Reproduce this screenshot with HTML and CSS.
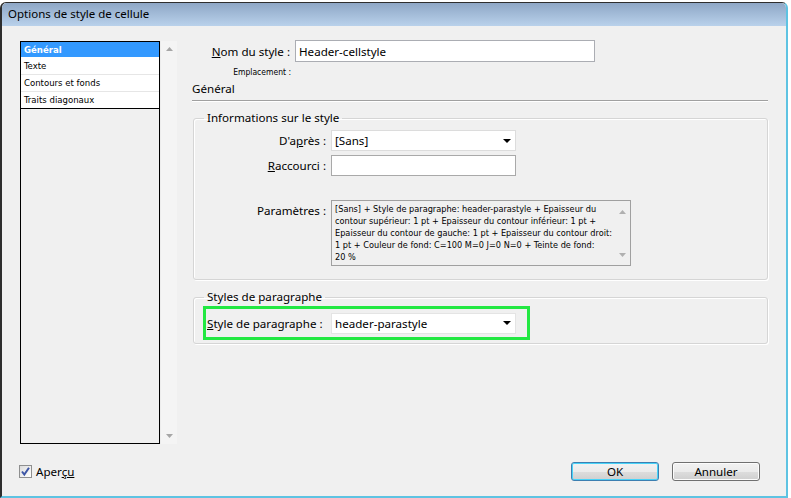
FILE: index.html
```html
<!DOCTYPE html>
<html lang="fr">
<head>
<meta charset="utf-8">
<title>Options de style de cellule</title>
<link rel="stylesheet" href="styles.css">
</head>
<body>
<div class="window">
  <div class="titlebar">Options de style de cellule</div>
  <div class="client">
    <div class="main">
      <div class="side">
        <ul class="list">
          <li class="item sel">Général</li>
          <li class="item">Texte</li>
          <li class="item">Contours et fonds</li>
          <li class="item last">Traits diagonaux</li>
        </ul>
        <div class="vscroll">
          <svg class="arr" width="7" height="4" viewBox="0 0 7 4"><path d="M0 4 L3.5 0 L7 4 Z" fill="#a6a6a6"/></svg>
          <svg class="arr" width="7" height="4" viewBox="0 0 7 4"><path d="M0 0 L3.5 4 L7 0 Z" fill="#a6a6a6"/></svg>
        </div>
      </div>
      <div class="panel">
        <div class="name-row">
          <span class="name-lbl"><u>N</u>om du style :</span>
          <div class="field name-input">Header-cellstyle</div>
        </div>
        <div class="emplacement">Emplacement :</div>
        <div class="section-title">Général</div>
        <div class="rule"></div>
        <fieldset class="group g1">
          <legend>Informations sur le style</legend>
          <div class="frow r1">
            <span class="flbl">D'a<u>p</u>rès :</span>
            <div class="field select sel-apres"><span>[Sans]</span><svg class="caret" width="8" height="4" viewBox="0 0 8 4"><path d="M0 0 H8 L4 4 Z" fill="#000"/></svg></div>
          </div>
          <div class="frow r2">
            <span class="flbl"><u>R</u>accourci :</span>
            <div class="field input-rac"></div>
          </div>
          <div class="frow r3">
            <span class="flbl plbl">Paramètres :</span>
            <div class="textarea">
              <div class="ta-text">[Sans] + Style de paragraphe: header-parastyle + Epaisseur du<br>contour supérieur: 1 pt + Epaisseur du contour inférieur: 1 pt +<br>Epaisseur du contour de gauche: 1 pt + Epaisseur du contour droit:<br>1 pt + Couleur de fond: C=100 M=0 J=0 N=0 + Teinte de fond:<br>20 %</div>
              <div class="ta-scroll">
                <svg width="7" height="4" viewBox="0 0 7 4"><path d="M0 4 L3.5 0 L7 4 Z" fill="#b0b0b0"/></svg>
                <svg width="7" height="4" viewBox="0 0 7 4"><path d="M0 0 L3.5 4 L7 0 Z" fill="#b0b0b0"/></svg>
              </div>
            </div>
          </div>
        </fieldset>
        <fieldset class="group g2">
          <legend>Styles de paragraphe</legend>
          <div class="highlight">
            <span class="hl-lbl"><u>S</u>tyle de paragraphe :</span>
            <div class="field select sel-para"><span>header-parastyle</span><svg class="caret" width="8" height="4" viewBox="0 0 8 4"><path d="M0 0 H8 L4 4 Z" fill="#000"/></svg></div>
          </div>
        </fieldset>
      </div>
    </div>
    <div class="footer">
      <div class="check">
        <span class="cbox"><svg width="11" height="11" viewBox="0 0 11 11"><path d="M2 5.5 L4.3 8.5 L9 1.8" fill="none" stroke="#3d56a6" stroke-width="2"/></svg></span>
        <span class="clbl">Aper<u>çu</u></span>
      </div>
      <div class="buttons">
        <div class="btn default">OK</div>
        <div class="btn">Annuler</div>
      </div>
    </div>
  </div>
</div>
</body>
</html>
```

FILE: styles.css
```css
* { box-sizing: border-box; }
html, body { margin: 0; padding: 0; background: #ffffff; }
body {
  font-family: "Noto Sans", "Open Sans", sans-serif;
  font-size: 11px;
  color: #000;
  width: 791px;
  height: 498px;
  overflow: hidden;
}
.window {
  margin-top: 2px;
  width: 788px;
  height: 496px;
  background: #f0f0f0;
  border-left: 2px solid #2e2e2e;
  border-top: 1px solid #2e2e2e;
  border-right: 2px solid #5ec3e2;
  border-bottom: 2px solid #5ec3e2;
  border-radius: 6px 6px 0 0;
  display: flex;
  flex-direction: column;
}
.titlebar {
  height: 23px;
  background: linear-gradient(#8ea7c6, #b9d1eb);
  border-radius: 5px 5px 0 0;
  padding-left: 6px;
  line-height: 22px;
  font-size: 11.5px;
}
.client {
  padding: 15px 17px 0 18px;
  display: flex;
  flex-direction: column;
}
.main {
  display: flex;
  height: 403px;
  gap: 15px;
}
.side {
  display: flex;
  width: 157px;
}
.list {
  margin: 0;
  padding: 0;
  list-style: none;
  width: 140px;
  border: 1px solid #000;
  background: #f0f0f0;
  font-family: "DejaVu Sans Condensed", "DejaVu Sans", sans-serif;
  font-size: 9.5px;
}
.item {
  height: 17px;
  line-height: 16px;
  padding-left: 3px;
  background: #fff;
  border-bottom: 1px solid #e6e6e6;
}
.item.sel {
  background: #3399ff;
  color: #fff;
  font-weight: bold;
  height: 16px;
  border-bottom-color: #fff;
}
.item.last { border-bottom: 1px solid #000; }
.vscroll {
  width: 17px;
  background: #f4f4f4;
  border-left: 1px solid #ececec;
  display: flex;
  flex-direction: column;
  justify-content: space-between;
  align-items: center;
  padding: 6px 0 6px;
}
.panel {
  width: 576px;
  display: flex;
  flex-direction: column;
}
.name-row {
  display: flex;
  align-items: center;
  margin-top: -1px;
  height: 22px;
}
.name-lbl {
  width: 98px;
  text-align: right;
  font-size: 11.6px;
}
.field {
  background: #fff;
  height: 21px;
  border: 1px solid #c5c5c5;
  display: flex;
  align-items: center;
  padding-left: 3px;
  font-size: 11.6px;
}
.name-input {
  margin-left: 5px;
  width: 300px;
  height: 22px;
  border-color: #abadb3;
}
.emplacement {
  margin-top: 5px;
  width: 99px;
  text-align: right;
  font-family: "DejaVu Sans Condensed", "DejaVu Sans", sans-serif;
  font-size: 8.5px;
  line-height: 11px;
}
.section-title {
  margin-top: 3px;
  font-size: 11.6px;
  line-height: 16px;
}
.rule {
  margin-top: 3px;
  height: 2px;
  border-top: 1px solid #a0a0a0;
  border-bottom: 1px solid #ffffff;
}
.group {
  margin: 0;
  padding: 0;
  min-width: 0;
  border: 1px solid #d5d5d5;
  border-radius: 3px;
  box-shadow: inset 1px 1px 0 #ffffff, 1px 1px 0 #ffffff;
  margin-left: 1px;
  width: 575px;
}
.group legend {
  margin-left: 10px;
  padding: 0 3px;
  font-size: 11.6px;
  line-height: 14px;
}
.g1 { margin-top: 9px; padding-bottom: 13px; }
.frow {
  display: flex;
  align-items: center;
}
.r1 { margin-top: 5px; }
.flbl {
  width: 132px;
  text-align: right;
  font-size: 11.6px;
  margin-right: 5px;
}
.select {
  justify-content: space-between;
  padding-right: 4px;
}
.sel-apres { width: 185px; border-color: #dcdcdc; }
.caret { display: block; }
.input-rac { width: 185px; border-color: #a9a9a9; }
.r2 { margin-top: 4px; }
.r3 { margin-top: 24px; align-items: flex-start; }
.plbl { margin-top: 3px; }
.textarea {
  width: 300px;
  height: 66px;
  background: #f0f0f0;
  border: 1px solid #a0a0a0;
  display: flex;
}
.ta-text {
  flex: 1;
  padding: 2px 0 0 3px;
  font-family: "DejaVu Sans Condensed", "DejaVu Sans", sans-serif;
  font-size: 9.1px;
  line-height: 12px;
  white-space: nowrap;
  overflow: hidden;
}
.ta-scroll {
  width: 16px;
  display: flex;
  flex-direction: column;
  justify-content: space-between;
  align-items: center;
  padding: 9px 0 8px;
}
.g2 { margin-top: 10px; padding: 0 0 3px 0; }
.highlight {
  margin: 2px 0 0 9px;
  width: 327px;
  height: 34px;
  border: 3px solid #22e842;
  display: flex;
  align-items: center;
  padding-left: 1px;
}
.hl-lbl { font-size: 11.6px; width: 124px; }
.sel-para { width: 185px; height: 21px; border-color: #e4e4e4; }
.footer {
  margin-top: 18px;
  display: flex;
  justify-content: space-between;
  align-items: flex-start;
}
.check {
  display: flex;
  align-items: center;
  margin-left: -1px;
  margin-top: 2px;
}
.cbox {
  width: 13px;
  height: 13px;
  border: 1px solid #8e8f8f;
  background: linear-gradient(135deg, #dcdcdc, #ffffff);
  display: flex;
  align-items: center;
  justify-content: center;
}
.clbl { margin-left: 4px; font-size: 11.6px; }
.buttons {
  display: flex;
  gap: 13px;
  margin-right: 9px;
}
.btn {
  width: 88px;
  height: 19px;
  border: 1px solid #707070;
  border-radius: 3px;
  background: linear-gradient(#f2f2f2 0%, #ebebeb 50%, #dddddd 51%, #cfcfcf 100%);
  box-shadow: inset 0 0 0 1px #fcfcfc;
  text-align: center;
  line-height: 17px;
  font-size: 11.6px;
}
.btn.default {
  border-color: #3c7fb1;
  box-shadow: inset 0 0 0 1px #48d3f8;
}
```
